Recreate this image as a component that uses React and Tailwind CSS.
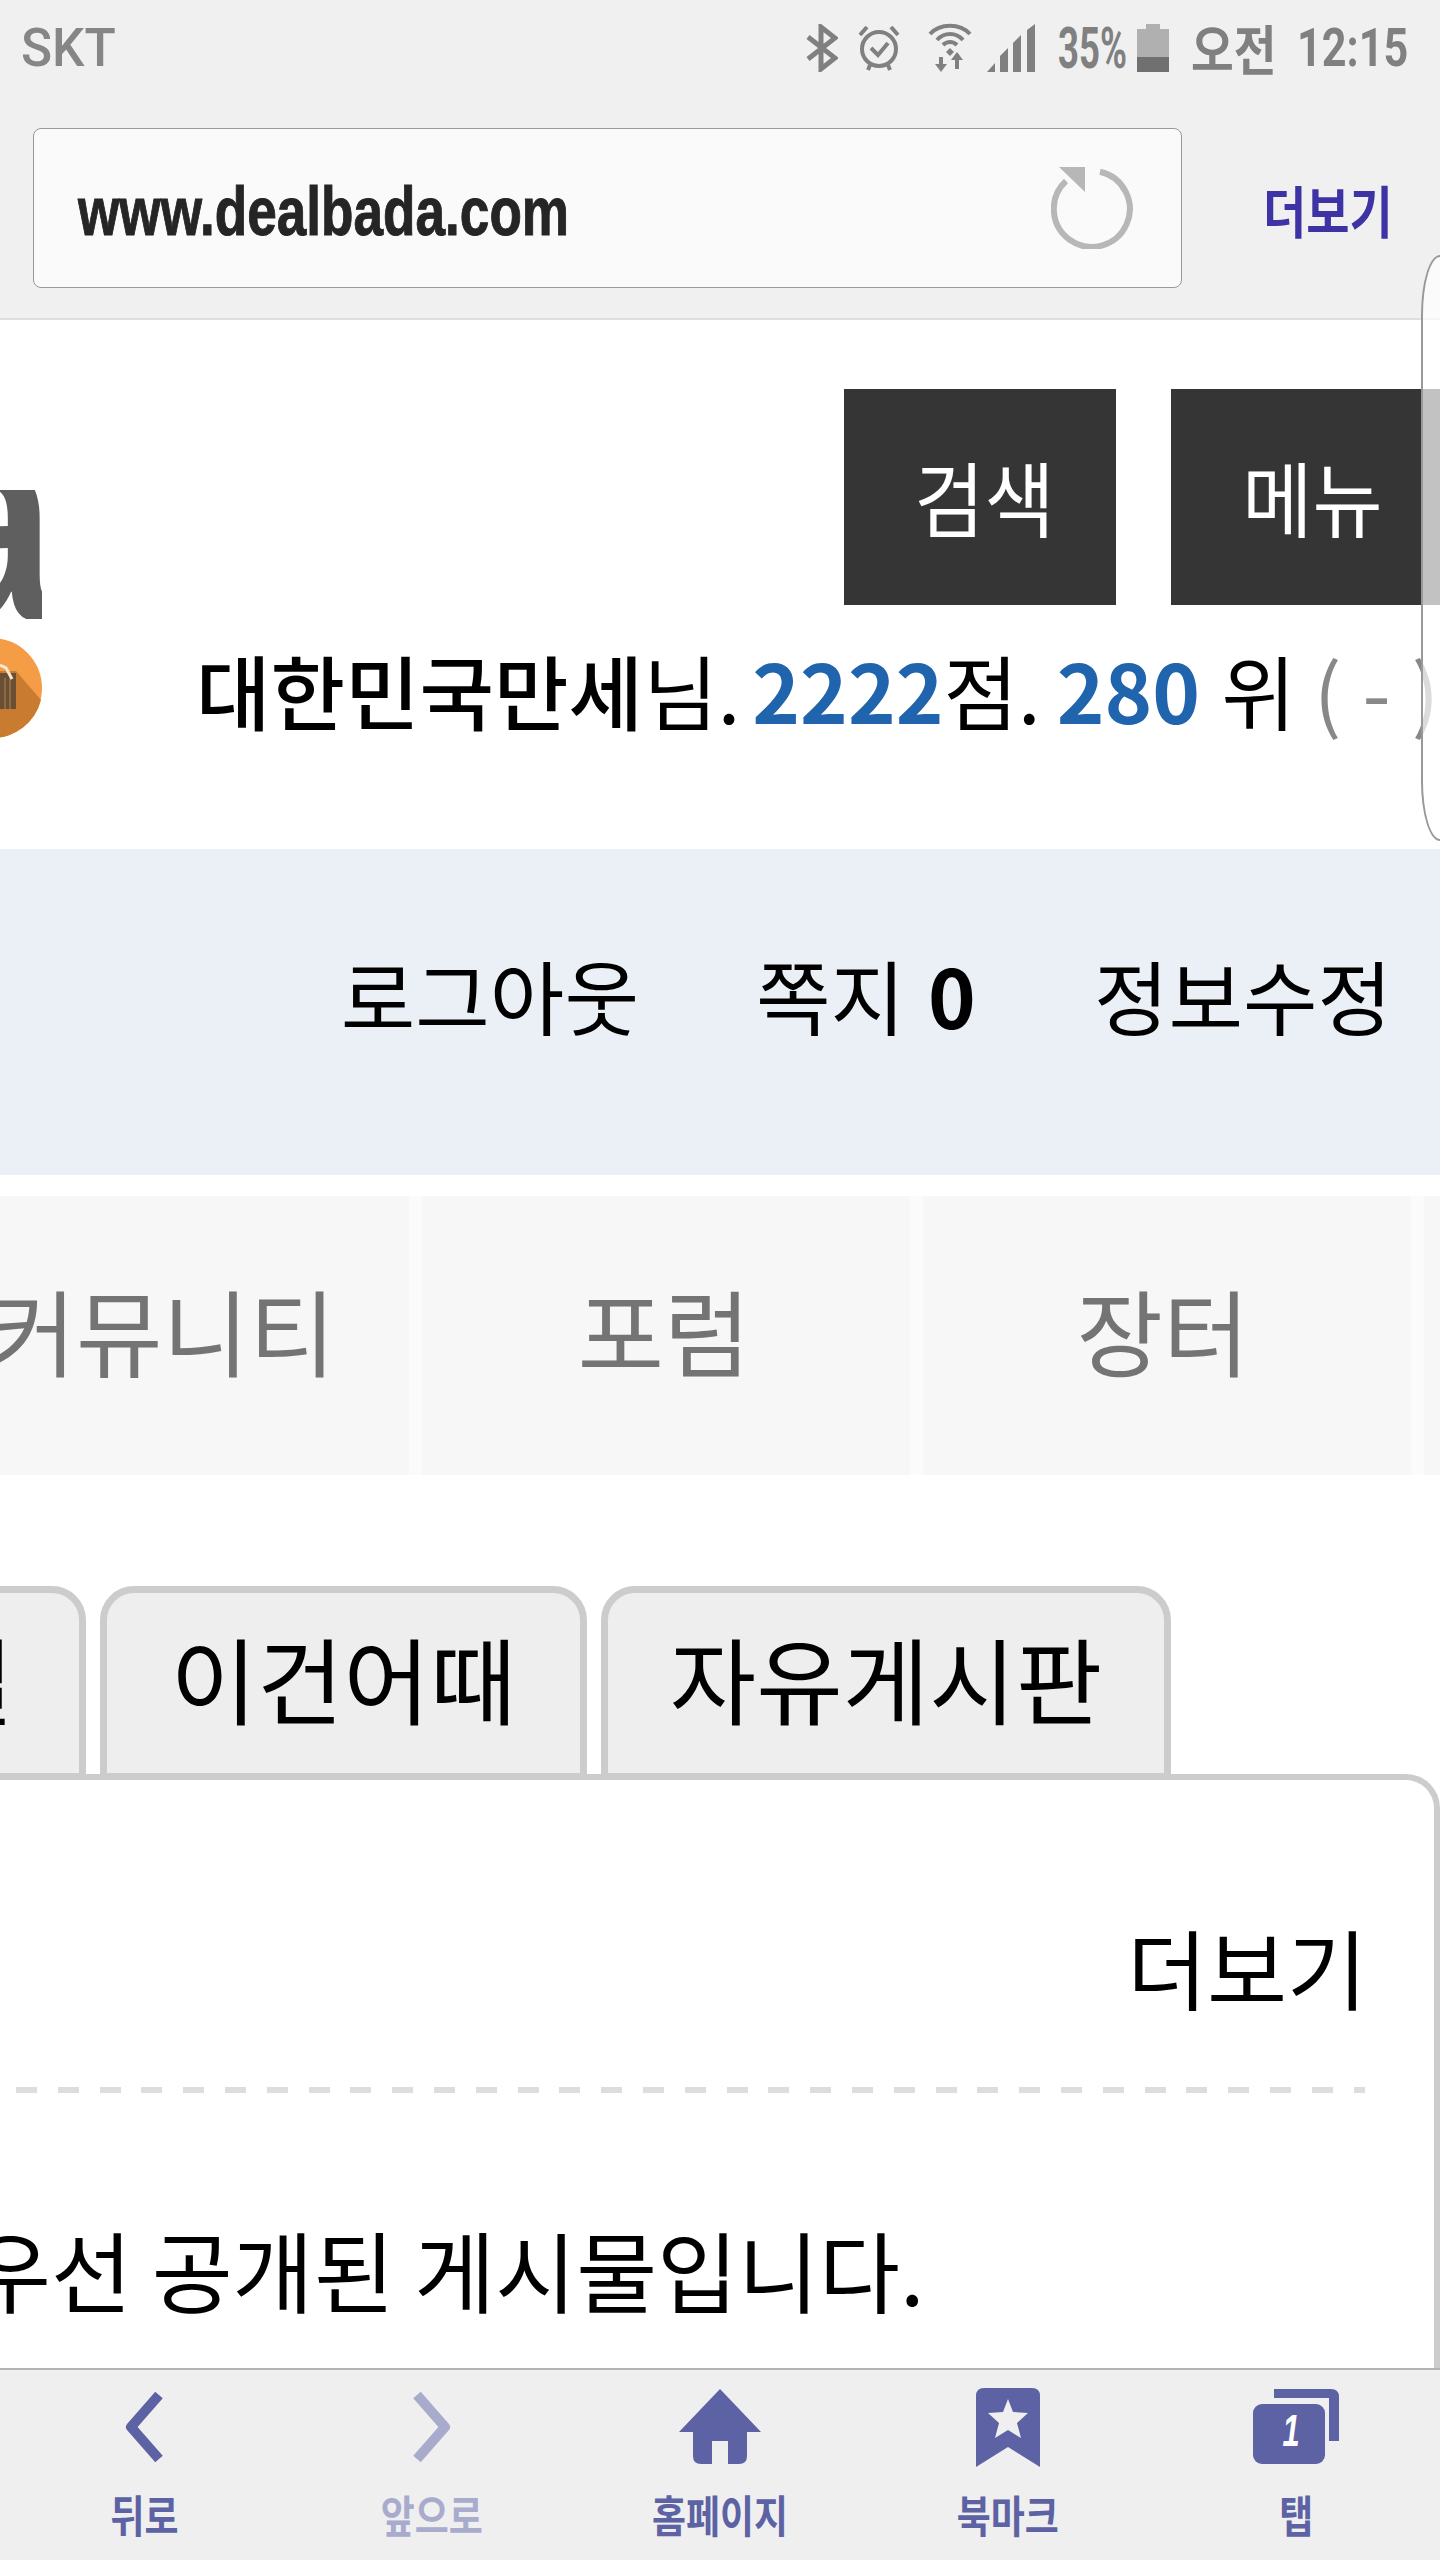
const KR = `font-['Noto_Sans_CJK_KR',sans-serif]`;

function Bluetooth() {
  return (
    <svg width="32" height="48" viewBox="0 0 32 48" fill="none" stroke="#808080" strokeWidth="5">
      <path d="M2 13 L29 34 L15 45 V3 L29 14 L2 35" />
    </svg>
  );
}

function Alarm() {
  return (
    <svg width="42" height="48" viewBox="0 0 42 48" fill="none" stroke="#808080">
      <circle cx="21" cy="25" r="17" strokeWidth="4" />
      <path d="M13 24 L20 31 L30 19" strokeWidth="4" />
      <path d="M2 11 L9 3 M40 11 L33 3 M10 46 L12 41 M32 46 L30 41" strokeWidth="4" />
    </svg>
  );
}

function Wifi() {
  return (
    <svg width="44" height="50" viewBox="0 0 44 50" fill="none" stroke="#808080" strokeWidth="4">
      <path d="M2 11 C12 0 32 0 42 11" />
      <path d="M9 17 C16 9 28 9 35 17" />
      <path d="M15 22 C19 18 25 18 29 22" />
      <path d="M22 25 L18 29 L22 33 L26 29 Z" fill="#808080" stroke="none" />
      <path d="M13 34 V46 M29 31 V46" strokeWidth="4" />
      <path d="M7 41 H19 L13 49 Z M23 37 H35 L29 29 Z" fill="#808080" stroke="none" />
    </svg>
  );
}

function Signal() {
  return (
    <svg width="49" height="48" viewBox="0 0 49 48" fill="#808080">
      <path d="M0 48 L8 39 V48 Z" />
      <path d="M13 48 V32 L21 24 V48 Z" />
      <path d="M26 48 V19 L34 11 V48 Z" />
      <path d="M40 48 V6 L48 0 V48 Z" />
    </svg>
  );
}

function Battery() {
  return (
    <svg width="32" height="48" viewBox="0 0 32 48">
      <rect x="9" y="0" width="14" height="6" fill="#b0b0b0" />
      <rect x="0" y="5" width="32" height="28" fill="#b0b0b0" />
      <rect x="0" y="33" width="32" height="15" fill="#707070" />
    </svg>
  );
}

function Reload() {
  return (
    <svg width="82" height="82" viewBox="0 0 82 82" fill="none">
      <path d="M49 4.8 A38 38 0 1 1 15 14" stroke="#b7b7b7" strokeWidth="6" />
      <path d="M8 0 H34 V25 Z" fill="#b7b7b7" />
    </svg>
  );
}

function LogoMark() {
  return (
    <svg width="42" height="100" viewBox="0 0 42 100">
      <circle cx="-8" cy="50" r="50" fill="#f49c46" />
      <path d="M16 33 L41 62 A50 50 0 0 1 -8 100 L-8 33 Z" fill="#c97c2f" />
      <path d="M0 35 H16 V71 H0 Z" fill="#6a4f35" />
      <path d="M5 40 V71 M10 40 V71" stroke="#8a6a45" strokeWidth="2" />
      <path d="M0 27 L6 30 L12 41" stroke="#f6e6d2" strokeWidth="3" fill="none" />
    </svg>
  );
}

function Chevron({ flip, color }) {
  return (
    <svg width="40" height="72" viewBox="0 0 40 72" fill="none" className={flip ? "-scale-x-100" : ""}>
      <path d="M35 4 L7 36 L35 68" stroke={color} strokeWidth="10" strokeLinejoin="round" />
    </svg>
  );
}

function Home() {
  return (
    <svg width="82" height="76" viewBox="0 0 82 76" fill="#5c62a4">
      <path d="M41 0 L82 43 H68 V67 Q68 75 60 75 H49 V52 H33 V75 H22 Q14 75 14 67 V43 H0 Z" />
    </svg>
  );
}

function Bookmark() {
  return (
    <svg width="64" height="79" viewBox="0 0 64 79">
      <path d="M0 8 Q0 0 8 0 H56 Q64 0 64 8 V79 L32 59 L0 79 Z" fill="#5c62a4" />
      <path d="M32 11 L37 24 L52 25 L41 35 L45 50 L32 42 L19 50 L23 35 L12 25 L27 24 Z" fill="#efefef" />
    </svg>
  );
}

function Tabs() {
  return (
    <svg width="86" height="76" viewBox="0 0 86 76">
      <path d="M21 0 H78 Q86 0 86 8 V52 H76 V9 H21 Z" fill="#5c62a4" />
      <rect x="0" y="15" width="72" height="60" rx="9" fill="#5c62a4" />
      <text transform="translate(38 57) scale(.7 1)" textAnchor="middle" fill="#fff" fontSize="44" fontWeight="700" fontStyle="italic" fontFamily="Liberation Sans">1</text>
    </svg>
  );
}

function BottomItem({ icon, label, color }) {
  return (
    <div className="flex flex-col items-center">
      <div className="h-[80px] mt-[17px] flex items-center justify-center">{icon}</div>
      <div className="h-[36px] mt-[29px] flex items-center justify-center">
        <span
          className={`whitespace-nowrap text-[44px] leading-none font-bold ${KR} scale-x-[.84]`}
          style={{ color }}
        >
          {label}
        </span>
      </div>
    </div>
  );
}

export default function App() {
  return (
    <div className={`relative w-[1440px] h-[2560px] overflow-hidden bg-white flex flex-col ${KR}`}>
      {/* browser top */}
      <div className="h-[320px] shrink-0 bg-[#f0f0f0] border-b-2 border-[#dedede]">
        <div className="h-[128px] pb-[32px] flex items-center justify-between pl-[21px] pr-[35px]">
          <div className="origin-left scale-x-[.95] text-[54px] leading-none font-medium text-[#868686] font-['Roboto',sans-serif]">SKT</div>
          <div className="flex items-center">
            <Bluetooth />
            <div className="ml-[20px]"><Alarm /></div>
            <div className="ml-[28px]"><Wifi /></div>
            <div className="ml-[15px]"><Signal /></div>
            <div className="ml-[22px] w-[68px]">
              <div className="whitespace-nowrap origin-left scale-x-[.63] text-[58px] leading-none font-bold text-[#808080] font-['Roboto',sans-serif]">35%</div>
            </div>
            <div className="ml-[11px]"><Battery /></div>
            <div className="ml-[22px] w-[86px]">
              <div className="whitespace-nowrap origin-left scale-x-[.86] text-[54px] leading-none font-bold text-[#808080]">오전</div>
            </div>
            <div className="ml-[20px] w-[108px]">
              <div className="whitespace-nowrap origin-left scale-x-[.8] text-[54px] leading-none font-bold text-[#808080] font-['Roboto',sans-serif]">12:15</div>
            </div>
          </div>
        </div>
        <div className="flex items-center pl-[33px]">
          <div className="w-[1149px] h-[160px] rounded-[8px] border border-[#999] bg-[#fafafa] flex items-center justify-between pl-[44px] pr-[48px]">
            <div className="mt-[6px] whitespace-nowrap origin-left scale-x-[.77] text-[69px] leading-none font-bold text-[#252525] [-webkit-text-stroke:1px_#252525] font-['Liberation_Sans',sans-serif]">www.dealbada.com</div>
            <Reload />
          </div>
          <div className="ml-[81px] mt-[2px] w-[130px]">
            <div className="whitespace-nowrap origin-left scale-x-[.84] text-[56px] leading-none font-bold text-[#3d33a4]">더보기</div>
          </div>
        </div>
      </div>

      {/* site header */}
      <div className="h-[529px] shrink-0 flex">
        <div className="w-[42px] shrink-0 pt-[170px] flex flex-col">
          <div className="h-[129px] flex justify-end items-start overflow-hidden">
            <span className="-mr-[13px] origin-right scale-x-[.8] text-[290px] leading-[57px] font-bold text-[#5f5f5f] font-['Liberation_Sans',sans-serif]">a</span>
          </div>
          <div className="mt-[19px]"><LogoMark /></div>
        </div>
        <div className="flex-1 min-w-0">
          <div className="mt-[69px] flex justify-end gap-[55px]">
            <div className="w-[272px] h-[216px] bg-[#353535] text-white flex items-center justify-center pl-[8px] pb-[4px]">
              <span className="text-[82px] scale-x-[.93]">검색</span>
            </div>
            <div className="w-[269px] h-[216px] bg-[#353535] text-white flex items-center justify-center pl-[14px] pb-[4px]">
              <span className="text-[82px] scale-x-[.93]">메뉴</span>
            </div>
          </div>
          <div className="mt-[34px] pl-[154px] whitespace-nowrap text-[81px] leading-[100px] text-black">
            <span className="font-medium">대한민국만세</span>님. <span className="-ml-[6px] font-bold text-[#1f64ad]">2222</span>점. <span className="-ml-[2px] font-bold text-[#1f64ad]">280</span> <span className="ml-[3px]">위</span> <span className="text-[#888]">( <span className="mx-[3px]">-</span> )</span>
          </div>
        </div>
      </div>

      {/* sub menu */}
      <div className="h-[326px] shrink-0 bg-[#ebf0f7] flex items-center justify-end pr-[48px] pb-[36px] text-[81px] text-black whitespace-nowrap">
        <span>로그아웃</span>
        <span className="ml-[117px]">쪽지 <b className="ml-[5px] font-bold">0</b></span>
        <span className="ml-[118px]">정보수정</span>
      </div>

      {/* nav */}
      <div className="mt-[21px] h-[279px] shrink-0 flex gap-[13px] bg-[#fbfbfb] text-[94px] text-[#747474] overflow-hidden">
        <div className="w-[489px] shrink-0 -ml-[80px] bg-[#f7f7f7] flex items-center justify-center pb-[12px] pr-[4px]">커뮤니티</div>
        <div className="w-[488px] shrink-0 bg-[#f7f7f7] flex items-center justify-center pb-[12px] pr-[4px]">포럼</div>
        <div className="w-[488px] shrink-0 bg-[#f7f7f7] flex items-center justify-center pb-[12px] pr-[8px]">장터</div>
        <div className="w-[488px] shrink-0 bg-[#f7f7f7]" />
      </div>

      {/* tabs */}
      <div className="mt-[111px] h-[194px] shrink-0 flex gap-[14px] items-start text-[94px] text-black overflow-hidden">
        <div className="w-[200px] shrink-0 -ml-[114px] h-[194px] bg-[#eee] border-[7px] border-[#ccc] rounded-t-[34px] flex items-center justify-end pr-[65px] pb-[12px] whitespace-nowrap">핫딜</div>
        <div className="w-[487px] shrink-0 h-[194px] bg-[#eee] border-[7px] border-[#ccc] rounded-t-[34px] flex items-center justify-center pb-[12px]">이건어때</div>
        <div className="w-[570px] shrink-0 h-[194px] bg-[#eee] border-[7px] border-[#ccc] rounded-t-[34px] flex items-center justify-center pb-[12px]">자유게시판</div>
      </div>

      {/* board panel */}
      <div className="-mt-[6px] flex-1 min-h-0 -ml-[50px] border-[6px] border-b-0 border-[#ccc] rounded-t-[34px] bg-white overflow-hidden">
        <div className="pt-[131px] pr-[67px] flex justify-end text-[87px] leading-[110px] text-black">더보기</div>
        <div className="mt-[66px] ml-[60px] w-[1349px] h-[6px] bg-[repeating-linear-gradient(90deg,#ddd_0,#ddd_21px,transparent_21px,transparent_41.8px)]" />
        <div className="mt-[120px] ml-[14px] whitespace-nowrap text-[88px] leading-[110px] text-black">우선 공개된 게시물입니다.</div>
      </div>

      {/* bottom bar */}
      <div className="h-[192px] shrink-0 bg-[#efefef] border-t-2 border-[#b4b4b4] grid grid-cols-5">
        <BottomItem icon={<Chevron color="#5c62a4" />} label="뒤로" color="#5c62a4" />
        <BottomItem icon={<Chevron flip color="#a9abcc" />} label="앞으로" color="#a9abcc" />
        <BottomItem icon={<Home />} label="홈페이지" color="#5c62a4" />
        <BottomItem icon={<Bookmark />} label="북마크" color="#5c62a4" />
        <BottomItem icon={<Tabs />} label="탭" color="#5c62a4" />
      </div>

      {/* edge panel handle */}
      <div className="absolute left-[1421px] top-[255px] w-[19px] h-[586px] border-2 border-r-0 border-[#999] bg-white/70 rounded-l-[19px_60px]" />
    </div>
  );
}
